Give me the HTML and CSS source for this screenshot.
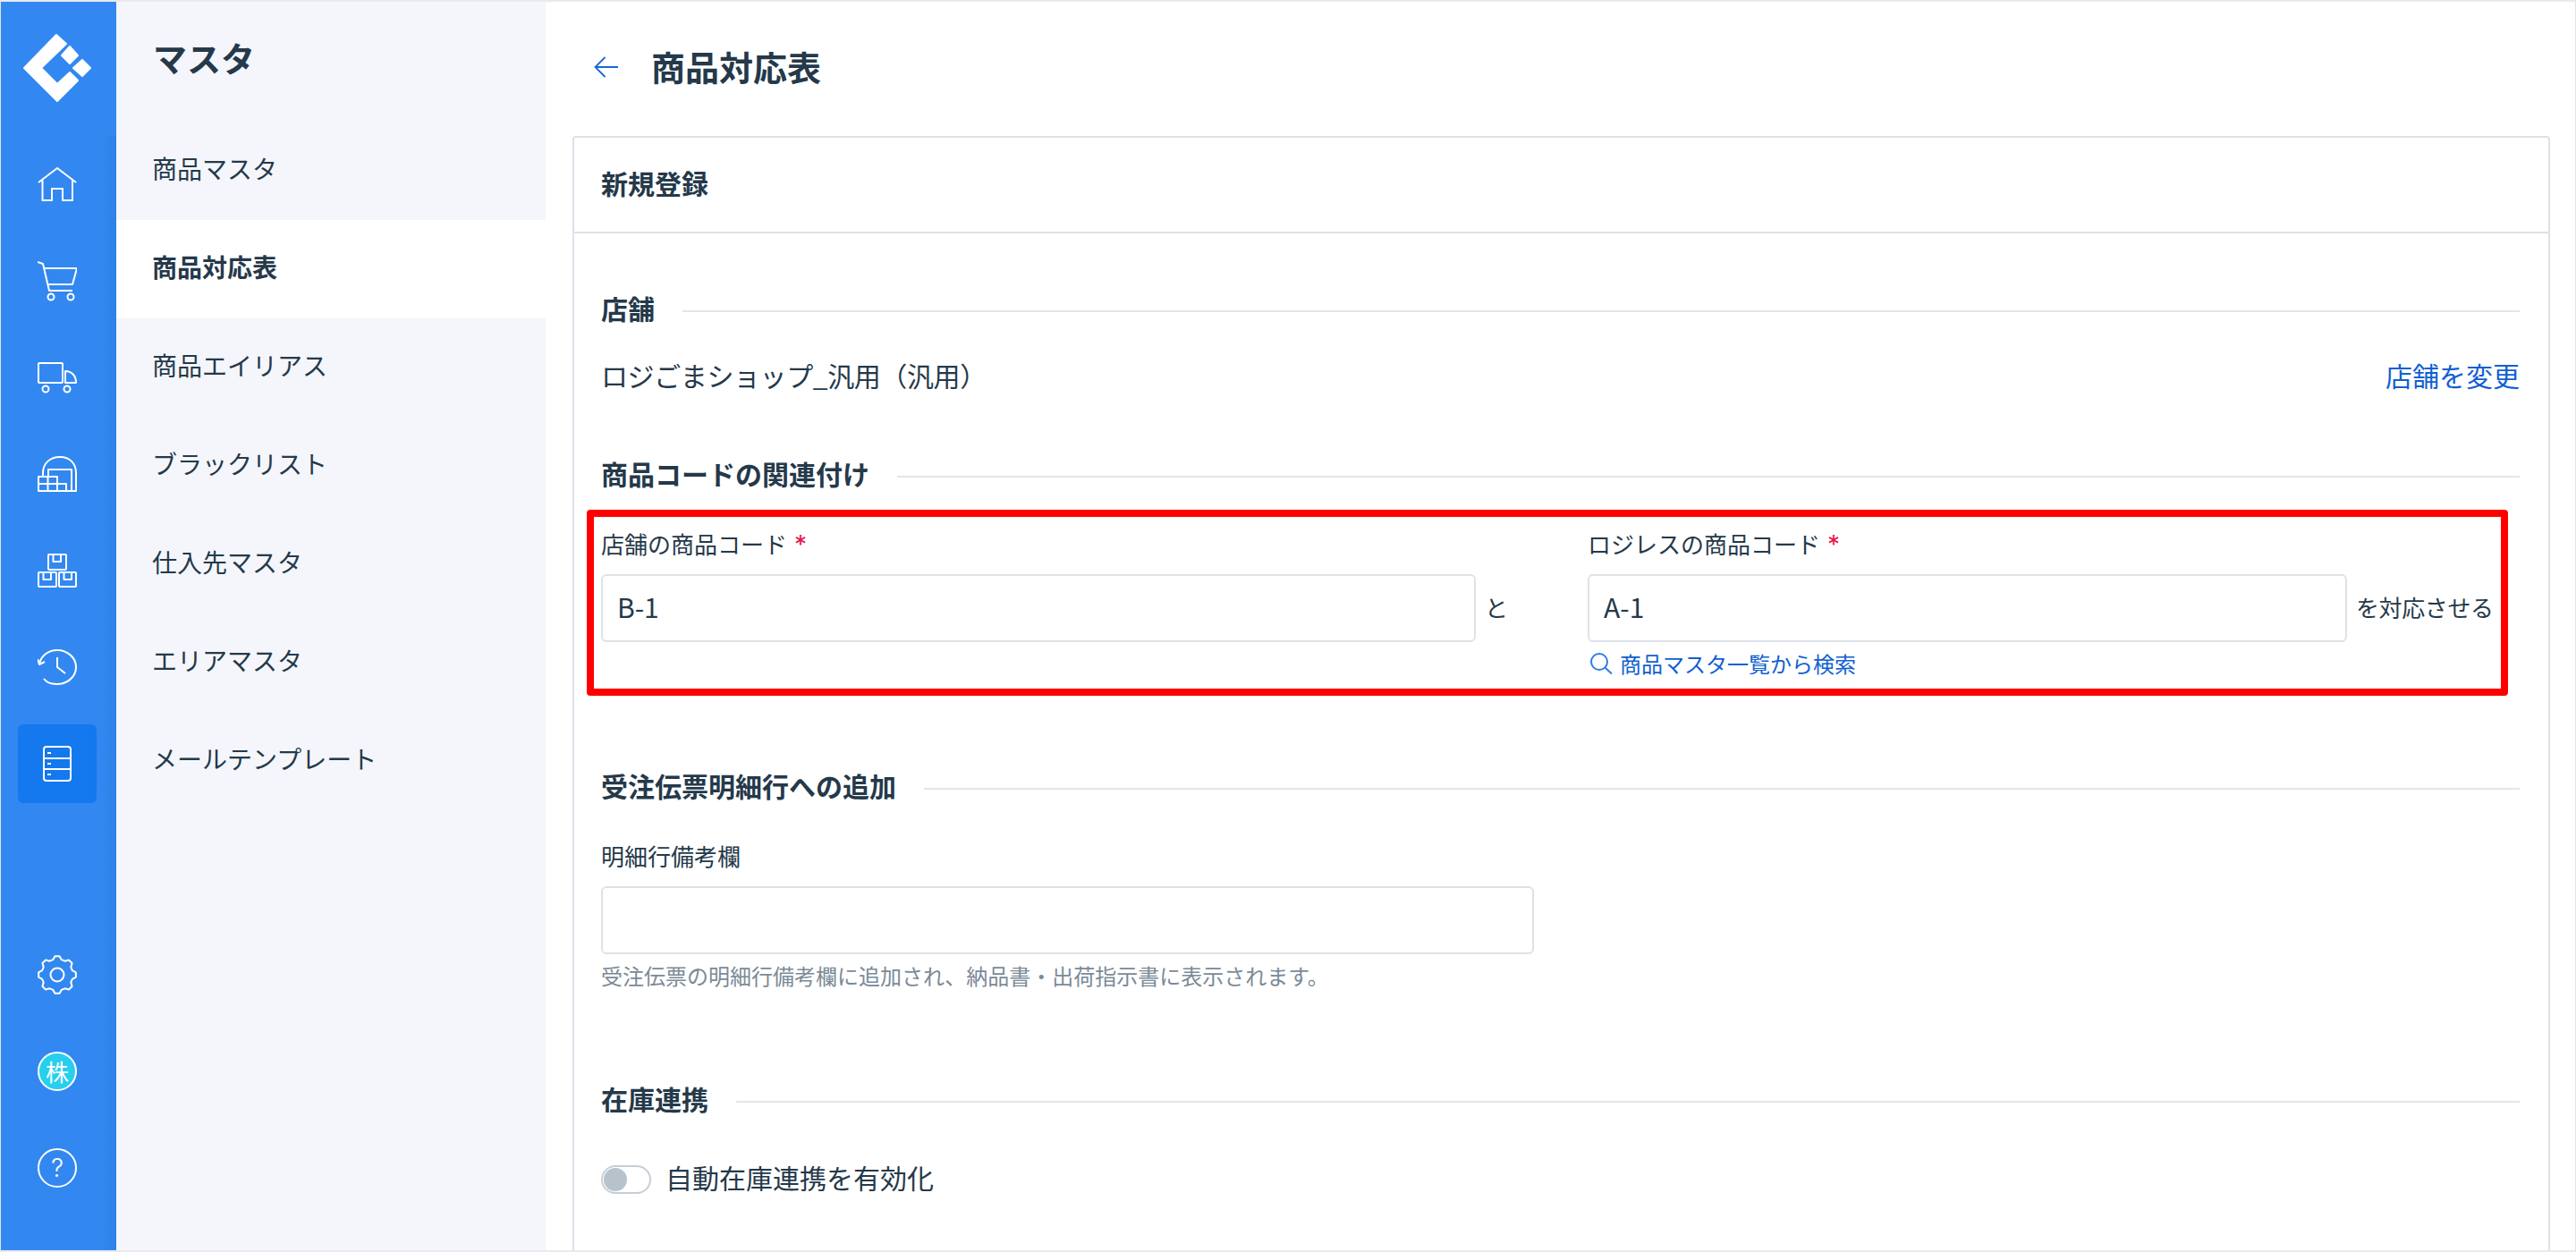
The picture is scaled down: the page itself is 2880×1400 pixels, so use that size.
FILE: index.html
```html
<!DOCTYPE html>
<html lang="ja">
<head>
<meta charset="utf-8">
<title>商品対応表</title>
<link rel="stylesheet" href="styles.css">
</head>
<body>
<div class="frame">
  <aside class="rail">
    <div class="rail-logo">
      <svg class="logo" viewBox="0 0 76 76" width="76" height="76"><g fill="#fff" stroke="#fff" stroke-width="2" stroke-linejoin="round"><polygon points="1,38 37,1 48,11 20,38 38,56 52,43 61,52 38,75"/><polygon points="52,14 61,24 52,33 43,24"/><polygon points="66,29 75,38 66,47 56,38"/></g></svg>
    </div>
    <nav class="rail-nav">
      <div class="rail-top">
        <a class="rail-item"><svg class="ico" viewBox="0 0 44 38" width="44" height="38"><path d="M1 17L22 1L43 17M5.5 13V37H16V24H28V37H39V13"/></svg></a>
        <a class="rail-item"><svg class="ico" viewBox="0 0 44 45" width="44" height="45"><path d="M0 1L6 3L13 33H39M7 8H44L39 26H11"/><circle cx="15" cy="40" r="3.5"/><circle cx="37" cy="40" r="3.5"/></svg></a>
        <a class="rail-item"><svg class="ico" viewBox="0 0 44 35" width="44" height="35"><rect x="1" y="1" width="27" height="22" rx="1"/><path d="M31 10C38 10 43 15 43 23H31Z"/><circle cx="9" cy="30" r="3.5"/><circle cx="33" cy="30" r="3.5"/></svg></a>
        <a class="rail-item"><svg class="ico" viewBox="0 0 44 40" width="44" height="40"><path d="M6 23V19C6 8 14 1 25 1C36 1 43 8 43 19V39H1V23H22V39M1 31H32V39M11.5 23V39M22 31V39M12 23V15H38V39"/></svg></a>
        <a class="rail-item"><svg class="ico" viewBox="0 0 44 38" width="44" height="38"><rect x="12" y="1" width="20" height="17" rx="1"/><path d="M17.5 1V9H26V1"/><rect x="1" y="21" width="20" height="16" rx="1"/><path d="M6.5 21V29H15V21"/><rect x="24" y="21" width="19" height="16" rx="1"/><path d="M29.5 21V29H38V21"/></svg></a>
        <a class="rail-item"><svg class="ico" viewBox="0 0 44 40" width="44" height="40"><path d="M7 33C10 37 16 39 22 39C33 39 43 31 43 20C43 9 33 1 22 1C11 1 4 8 2 16M0 11L2 17L8 14M22 9V20L31 27"/></svg></a>
        <a class="rail-item rail-item-active"><svg class="ico" viewBox="0 0 32 40" width="32" height="40"><rect x="1" y="1" width="30" height="38" rx="3"/><path d="M1 14H31M1 26H31M5 8H9M5 20H9M5 32H9"/></svg></a>
      </div>
      <div class="rail-bottom">
        <a class="rail-item"><svg class="ico" viewBox="0 0 44 44" width="44" height="44"><polygon points="19.44,1.16 24.56,1.16 26.82,5.18 30.48,6.69 34.93,5.45 38.55,9.07 37.31,13.52 38.82,17.18 42.84,19.44 42.84,24.56 38.82,26.82 37.31,30.48 38.55,34.93 34.93,38.55 30.48,37.31 26.82,38.82 24.56,42.84 19.44,42.84 17.18,38.82 13.52,37.31 9.07,38.55 5.45,34.93 6.69,30.48 5.18,26.82 1.16,24.56 1.16,19.44 5.18,17.18 6.69,13.52 5.45,9.07 9.07,5.45 13.52,6.69 17.18,5.18"/><circle cx="22" cy="22" r="7.5"/></svg></a>
        <a class="rail-item"><span class="avatar">株</span></a>
        <a class="rail-item"><span class="help">?</span></a>
      </div>
    </nav>
  </aside>

  <aside class="subnav">
    <h2 class="subnav-title">マスタ</h2>
    <ul class="subnav-list">
      <li class="subnav-item">商品マスタ</li>
      <li class="subnav-item subnav-item-active">商品対応表</li>
      <li class="subnav-item">商品エイリアス</li>
      <li class="subnav-item">ブラックリスト</li>
      <li class="subnav-item">仕入先マスタ</li>
      <li class="subnav-item">エリアマスタ</li>
      <li class="subnav-item">メールテンプレート</li>
    </ul>
  </aside>

  <main class="main">
    <header class="page-head">
      <svg class="back" viewBox="0 0 27 24" width="27" height="24"><path d="M12.5 1L1.5 12L12.5 23M1.5 12H27"/></svg>
      <h1 class="page-title">商品対応表</h1>
    </header>
    <section class="card">
      <div class="card-head">新規登録</div>
      <div class="card-body">
        <div class="sec-head"><h3 class="sec-title">店舗</h3><span class="sec-line"></span></div>
        <div class="store-row"><span class="store-name">ロジごまショップ_汎用（汎用）</span><a class="link">店舗を変更</a></div>

        <div class="sec-head sec-second"><h3 class="sec-title">商品コードの関連付け</h3><span class="sec-line"></span></div>
        <div class="code-grid">
          <div class="label">店舗の商品コード<span class="req">*</span></div>
          <div></div>
          <div class="label">ロジレスの商品コード<span class="req">*</span></div>
          <div></div>
          <div class="input">B-1</div>
          <div class="joiner">と</div>
          <div class="input">A-1</div>
          <div class="joiner joiner-tight">を対応させる</div>
          <div></div>
          <div></div>
          <a class="search-link"><svg class="search-ico" viewBox="0 0 26 24" width="26" height="24"><circle cx="11" cy="10" r="9"/><path d="M17.5 16.5L25 23.5"/></svg>商品マスタ一覧から検索</a>
        </div>

        <div class="sec-head sec-third"><h3 class="sec-title">受注伝票明細行への追加</h3><span class="sec-line"></span></div>
        <div class="label label-note">明細行備考欄</div>
        <div class="input input-note"></div>
        <p class="hint">受注伝票の明細行備考欄に追加され、納品書・出荷指示書に表示されます。</p>

        <div class="sec-head sec-fourth"><h3 class="sec-title">在庫連携</h3><span class="sec-line"></span></div>
        <div class="toggle-row"><span class="toggle"><span class="knob"></span></span><span class="toggle-text">自動在庫連携を有効化</span></div>
      </div>
    </section>
    <div class="highlight"></div>
  </main>
</div>
</body>
</html>
```

FILE: styles.css
```css
* { box-sizing: border-box; }
html, body { margin: 0; padding: 0; background: #fff; }
body {
  font-family: "Noto Sans CJK JP", "Noto Sans", sans-serif;
  color: #25394a;
}
h1, h2, h3, p, ul { margin: 0; padding: 0; }
ul { list-style: none; }

.frame {
  display: flex;
  width: 2880px;
  height: 1400px;
  overflow: hidden;
  border-top: 2px solid #e8eaed;
  border-bottom: 2px solid #e8eaed;
  border-left: 1px solid #e0e3e8;
  border-right: 1px solid #e0e3e8;
}

/* icon rail */
.rail { width: 129px; flex: none; display: flex; flex-direction: column; background: #3288f0; }
.rail-logo { height: 150px; flex: none; padding: 36px 0 0 25px; }
.logo { display: block; }
.rail-nav {
  flex: 1;
  display: flex;
  flex-direction: column;
  justify-content: space-between;
  padding: 10px 0 48px;
  background: linear-gradient(to right, #3288f0 0, #3288f0 88%, #2d81e8 100%);
}
.rail-top, .rail-bottom { display: flex; flex-direction: column; gap: 20px; }
.rail-item {
  width: 88px;
  height: 88px;
  margin-left: 19px;
  display: flex;
  align-items: center;
  justify-content: center;
  border-radius: 6px;
}
.rail-item-active { background: #1478ee; }
.ico { fill: none; stroke: #fff; stroke-width: 2; stroke-linejoin: round; display: block; }
.avatar, .help {
  width: 44px;
  height: 44px;
  border-radius: 50%;
  border: 2px solid #fff;
  color: #fff;
  display: flex;
  align-items: center;
  justify-content: center;
}
.avatar { background: #27cfee; font-size: 26px; line-height: 1; }
.help { font-size: 28px; line-height: 1; font-family: "Inter", "Noto Sans", sans-serif; font-weight: 300; }

/* sub navigation */
.subnav { width: 480px; flex: none; background: #f4f6fb; }
.subnav-title {
  height: 134px;
  padding: 40px 0 0 41px;
  font-size: 38px;
  line-height: 44px;
  font-weight: 700;
}
.subnav-item {
  height: 110px;
  padding: 0 0 6px 40px;
  display: flex;
  align-items: center;
  font-size: 28px;
}
.subnav-item-active { background: #fff; font-weight: 700; }

/* main */
.main { flex: 1; position: relative; padding: 0 28px 0 30px; min-width: 0; }
.page-head { height: 150px; display: flex; align-items: center; padding: 0 0 4px 24px; gap: 37px; }
.back { fill: none; stroke: #1b66d2; stroke-width: 1.8; display: block; }
.page-title { font-size: 38px; line-height: 48px; font-weight: 700; margin-bottom: 2px; }

.card { height: 1260px; border: 2px solid #dde2e7; border-radius: 4px; }
.card-head {
  height: 107px;
  padding: 0 0 6px 30px;
  display: flex;
  align-items: center;
  border-bottom: 2px solid #dde2e7;
  font-size: 30px;
  font-weight: 700;
}
.card-body { padding: 63px 32px 0 30px; }

.sec-head { display: flex; align-items: center; gap: 31px; height: 44px; }
.sec-title { font-size: 30px; line-height: 44px; padding-bottom: 4px; font-weight: 700; white-space: nowrap; }
.sec-line { flex: 1; height: 2px; margin-top: 3px; background: #e3e5e8; }
.sec-second { margin-top: 66px; }
.sec-third { margin-top: 98px; }
.sec-fourth { margin-top: 100px; }

.store-row {
  margin-top: 31px;
  height: 44px;
  padding-bottom: 4px;
  display: flex;
  justify-content: space-between;
  align-items: center;
  font-size: 30px;
}
.store-name { letter-spacing: -0.4px; }
.link { color: #1060d0; }

.code-grid {
  margin-top: 38px;
  display: grid;
  grid-template-columns: 978px 125px 849px 1fr;
  grid-template-rows: 36px 91px 42px;
}
.label { height: 36px; font-size: 26px; line-height: 34px; }
.code-grid > .input { margin-top: 15px; }
.req { color: #e8174a; margin-left: 8px; font-family: "Inter", sans-serif; font-size: 28px; line-height: 26px; }
.input {
  height: 76px;
  border: 2px solid #dde2e7;
  border-radius: 6px;
  padding: 0 0 4px 16px;
  display: flex;
  align-items: center;
  font-size: 30px;
  background: #fff;
}
.joiner {
  margin-top: 15px;
  height: 76px;
  padding: 0 0 4px 10px;
  display: flex;
  align-items: center;
  font-size: 26px;
  white-space: nowrap;
}
.joiner-tight { letter-spacing: -0.4px; }
.search-link {
  margin-top: 8px;
  height: 34px;
  padding: 0 0 3px 2px;
  display: flex;
  align-items: center;
  gap: 8px;
  color: #1060d0;
  font-size: 24px;
}
.search-ico { fill: none; stroke: #2f7de0; stroke-width: 2; display: block; flex: none; }

.label-note { margin-top: 38px; }
.input-note { width: 1043px; margin-top: 15px; }
.hint { margin-top: 9px; height: 32px; font-size: 24px; line-height: 30px; color: #7b8a97; white-space: nowrap; }

.toggle-row { margin-top: 45px; height: 44px; display: flex; align-items: center; gap: 16px; font-size: 30px; }
.toggle-text { padding-bottom: 6px; }
.toggle {
  width: 56px;
  height: 32px;
  border: 2px solid #c6ced5;
  border-radius: 16px;
  padding: 1px;
  background: #fff;
  flex: none;
}
.knob { display: block; width: 26px; height: 26px; border-radius: 50%; background: #b6c2cc; }

/* annotation drawn over the form */
.highlight {
  position: absolute;
  left: 46px;
  top: 568px;
  width: 2148px;
  height: 208px;
  border: 8px solid #ff0000;
  border-radius: 4px;
  pointer-events: none;
}
```
